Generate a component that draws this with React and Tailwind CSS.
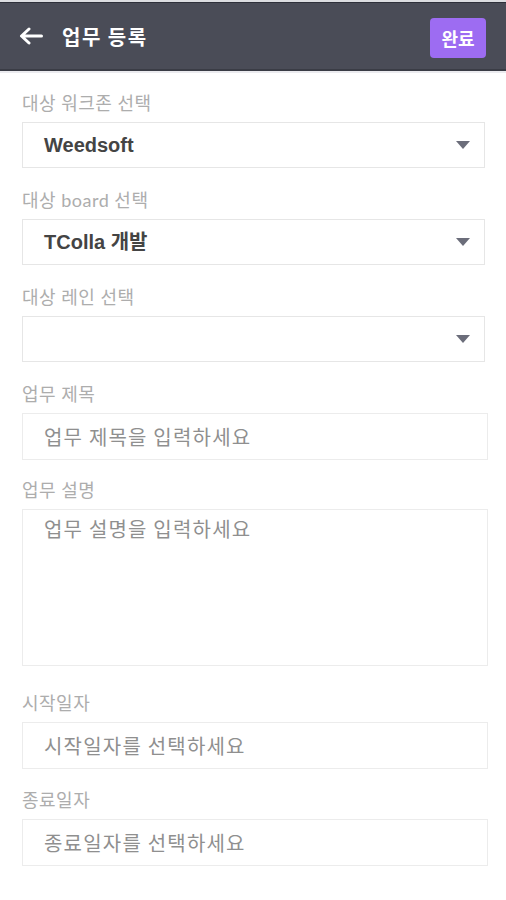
import React from "react";

const KR = "font-['Noto_Sans_CJK_KR','Noto_Sans',sans-serif]";

function Label({ children, className = "" }) {
  return (
    <div
      className={`h-[20px] leading-[20px] text-[18px] tracking-[0.5px] text-[#adadad] font-['Lato','Noto_Sans_CJK_KR',sans-serif] mb-[9px] ${className}`}
    >
      {children}
    </div>
  );
}

function SelectBox({ value }) {
  return (
    <div className="w-[463px] h-[46px] border border-[#e6e6e6] bg-white flex items-center justify-between pl-[21px] pr-[14px]">
      <span className="text-[20px] font-bold text-[#444444] font-['Liberation_Sans','Noto_Sans_CJK_KR',sans-serif]">
        {value}
      </span>
      <svg width="14" height="8" viewBox="0 0 14 8">
        <path d="M0 0H14L7 8Z" fill="#6b6d7a" />
      </svg>
    </div>
  );
}

function TextInput({ placeholder }) {
  return (
    <input
      type="text"
      placeholder={placeholder}
      className={`block w-[466px] h-[47px] border border-[#ececec] bg-white pl-[21px] text-[20px] tracking-[1.2px] text-[#444] placeholder:text-[#8f8f8f] outline-none ${KR}`}
    />
  );
}

export default function App() {
  return (
    <div className="w-[506px] min-h-[900px] bg-white">
      {/* header */}
      <div className="bg-[#dcdde1] pt-[2px]">
        <div className="h-[69px] bg-[#4a4c57] border-t border-[#2e303a] border-b-2 border-b-[#3a3c45] flex items-center justify-between pl-[19px] pr-[20px]">
          <div className="flex items-center gap-[19px]">
            <svg width="24" height="18" viewBox="0 0 24 18" fill="none">
              <path
                d="M22.5 9H3M10 2L2.5 9L10 16"
                stroke="white"
                strokeWidth="3"
                strokeLinecap="round"
                strokeLinejoin="round"
              />
            </svg>
            <span className={`text-[20px] font-bold tracking-[1.5px] text-white pt-[2px] ${KR}`}>업무 등록</span>
          </div>
          <button
            className={`w-[56px] h-[40px] mt-[4px] rounded-[4px] bg-[#9d6cf2] text-white text-[18px] font-bold ${KR}`}
          >
            완료
          </button>
        </div>
      </div>
      <div className="h-[2px] bg-[#ebebef]" />

      {/* form */}
      <div className="px-[22px] pt-[20px] pb-[30px]">
        <Label>대상 워크존 선택</Label>
        <SelectBox value="Weedsoft" />

        <Label className="mt-[22px]">대상 board 선택</Label>
        <SelectBox value="TColla 개발" />

        <Label className="mt-[22px]">대상 레인 선택</Label>
        <SelectBox value="" />

        <Label className="mt-[22px]">업무 제목</Label>
        <TextInput placeholder="업무 제목을 입력하세요" />

        <Label className="mt-[20px]">업무 설명</Label>
        <textarea
          placeholder="업무 설명을 입력하세요"
          className={`block w-[466px] h-[157px] border border-[#ececec] bg-white pl-[21px] pt-[4px] text-[20px] leading-[30px] tracking-[1.2px] text-[#444] placeholder:text-[#8f8f8f] outline-none resize-none ${KR}`}
        />

        <Label className="mt-[27px]">시작일자</Label>
        <TextInput placeholder="시작일자를 선택하세요" />

        <Label className="mt-[21px]">종료일자</Label>
        <TextInput placeholder="종료일자를 선택하세요" />
      </div>
    </div>
  );
}
